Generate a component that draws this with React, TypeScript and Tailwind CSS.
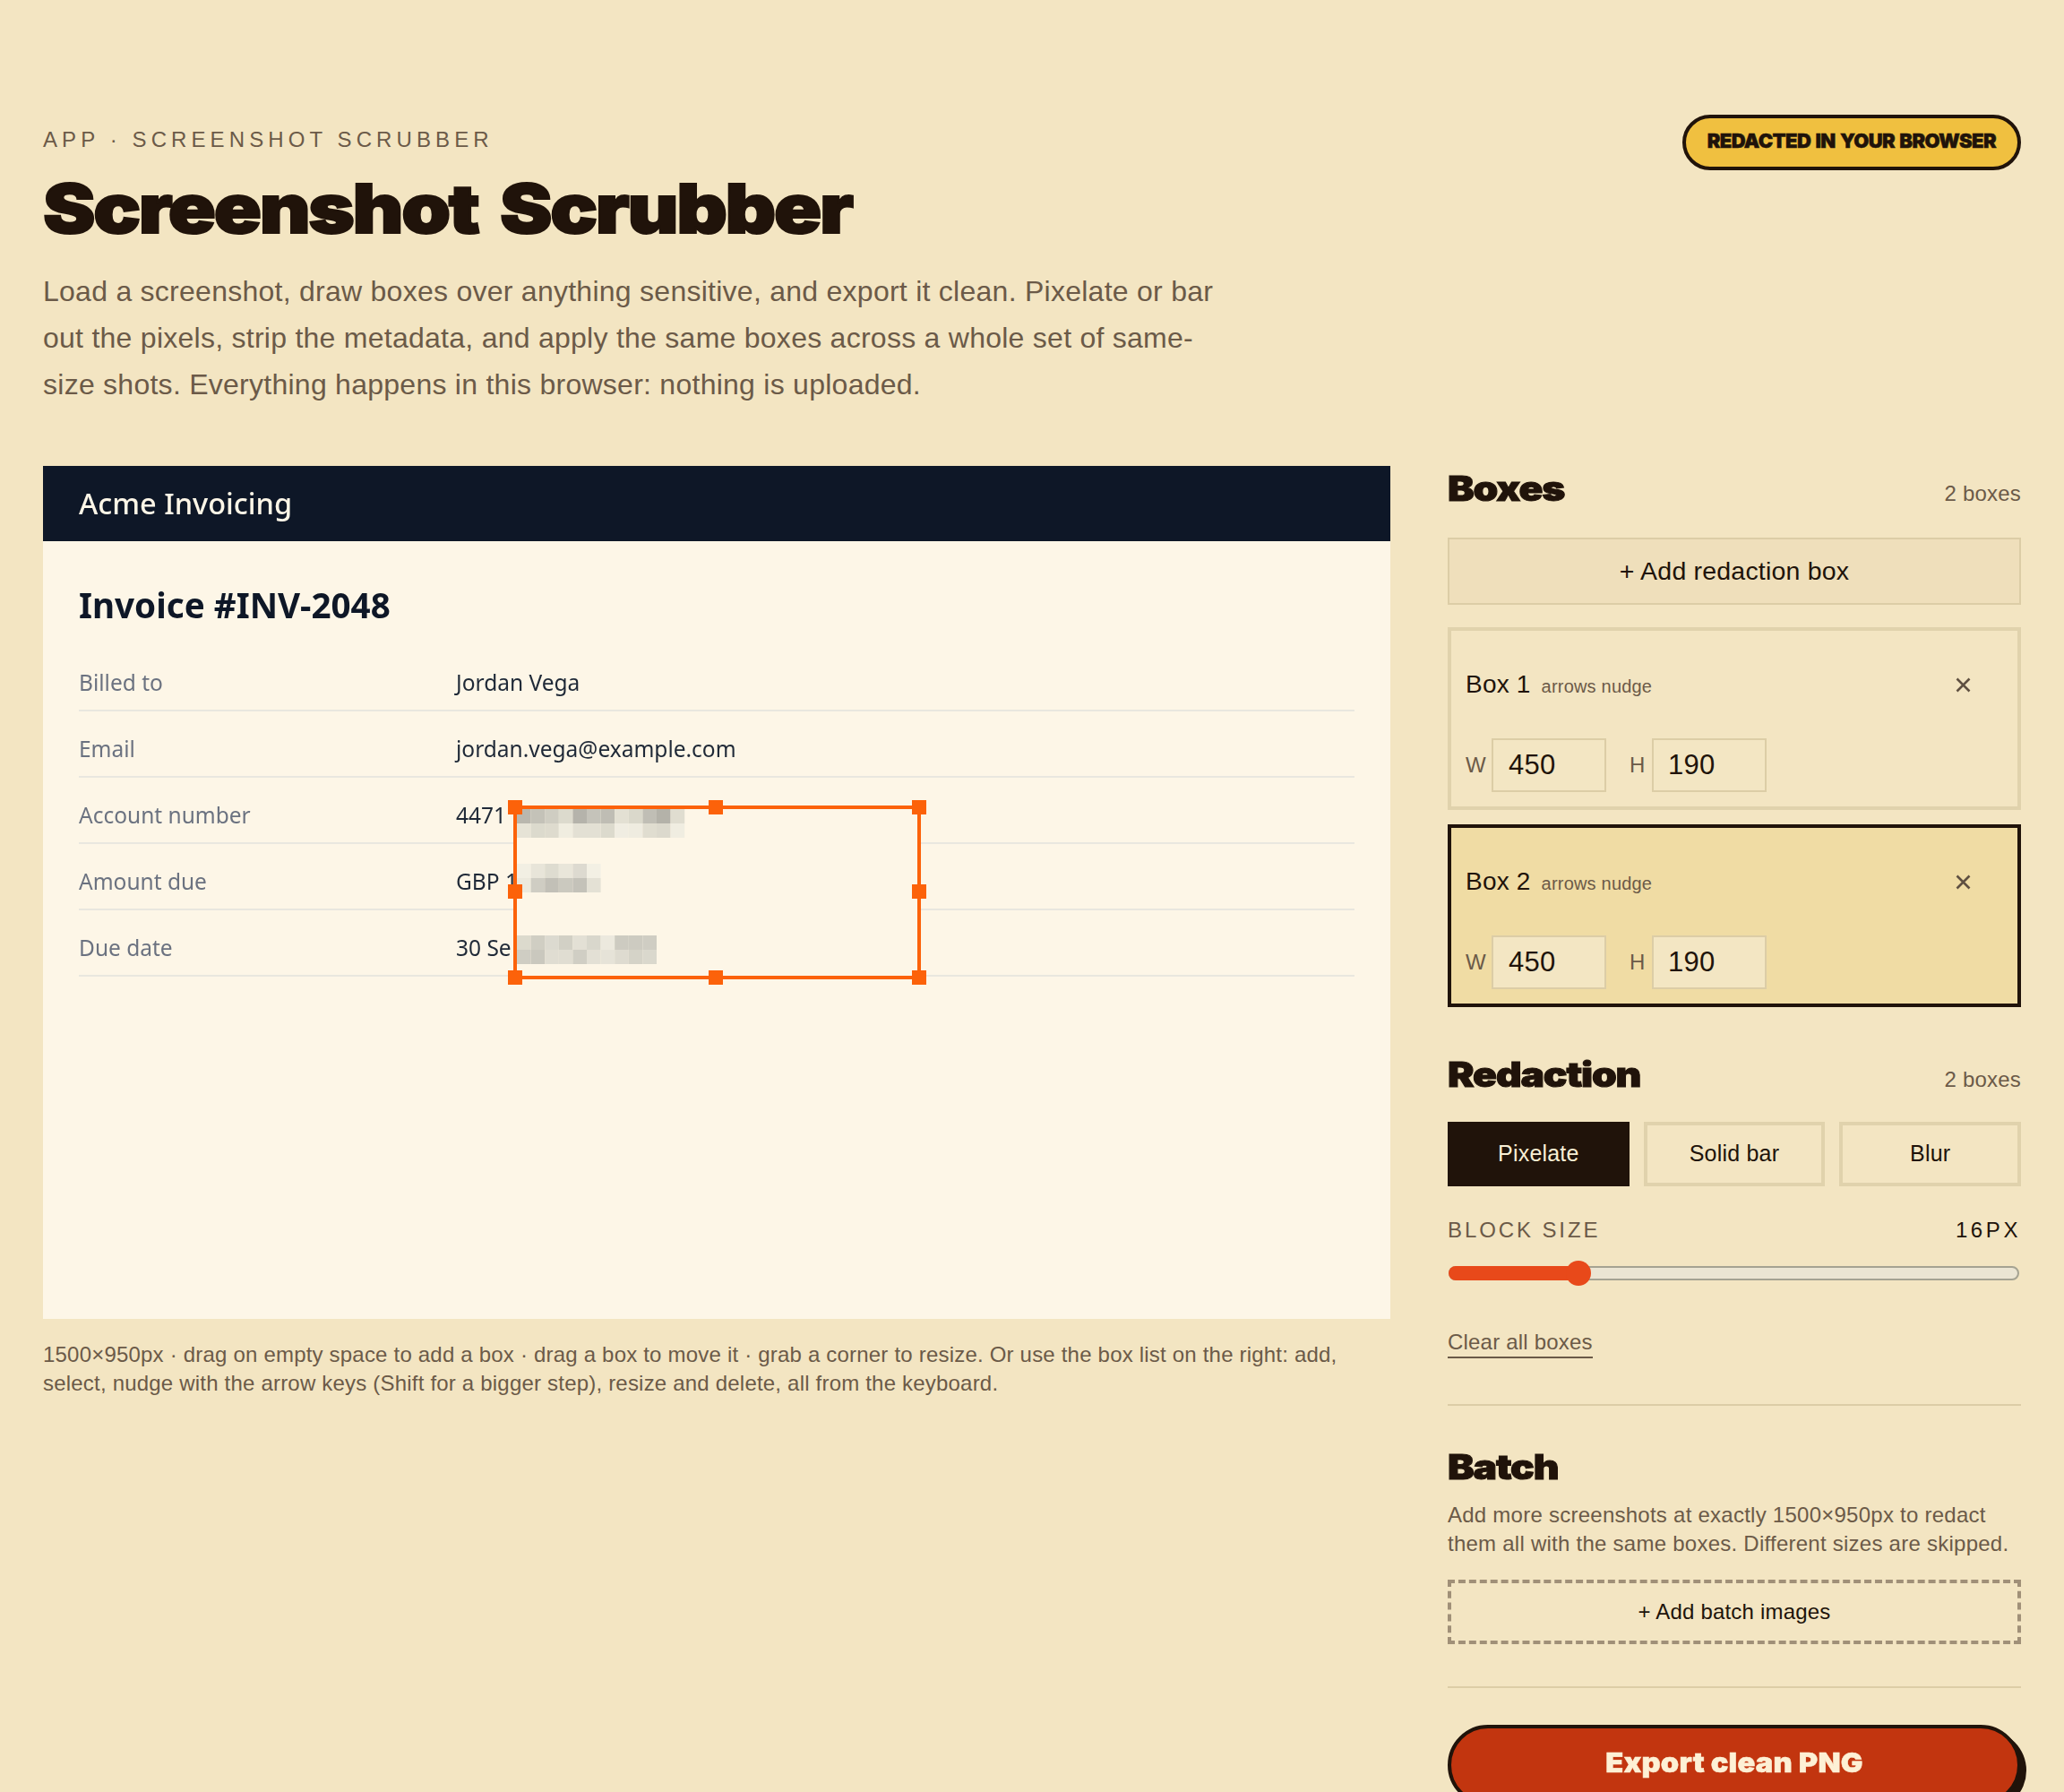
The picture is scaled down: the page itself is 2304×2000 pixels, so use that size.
import React from 'react';

const rows = [
  { label: 'Billed to', value: 'Jordan Vega' },
  { label: 'Email', value: 'jordan.vega@example.com' },
  { label: 'Account number', value: '4471' },
  { label: 'Amount due', value: 'GBP 1' },
  { label: 'Due date', value: '30 Se' },
];

// pixelated blocks inside the redaction box: [y, colours]
const blocks: [number, string[]][] = [
  [0, ['#b9b7ae', '#c4c2b8', '#cfcdc2', '#dcdacd', '#b5b3ab', '#c5c3ba', '#bfbdb4', '#e3e0d3', '#dad8cb', '#c0beb5', '#b4b2a9', '#e0ddd0']],
  [16, ['#e6e3d6', '#dcdacd', '#dedbce', '#f0ede0', '#e3e0d4', '#e3e0d4', '#dcdacd', '#f0ede2', '#efece0', '#e0ddd0', '#dcd9cd', '#f0ede1']],
  [61, ['#f2efe3', '#e8e5d9', '#dedcd0', '#e9e6da', '#dddad0', '#f3f0e4']],
  [77, ['#ece9dd', '#cfcdc3', '#c2c0b7', '#cbc9bf', '#c4c2b9', '#e4e1d5']],
  [141, ['#dcdacd', '#d0cec3', '#dcdad0', '#d2d0c5', '#e3e0d5', '#d9d7cc', '#ece9de', '#cdcbc1', '#cdcbc1', '#cfcdc3']],
  [157, ['#cfcdc3', '#cac8be', '#e0ddd2', '#e0ddd2', '#d0cec4', '#e3e0d5', '#e6e3d8', '#dedbd0', '#d5d3c8', '#dad8cd']],
];

const handleClasses = [
  'left-[-10px] top-[-10px]',
  'left-[214px] top-[-10px]',
  'right-[-10px] top-[-10px]',
  'left-[-10px] top-[84px]',
  'right-[-10px] top-[84px]',
  'left-[-10px] bottom-[-10px]',
  'left-[214px] bottom-[-10px]',
  'right-[-10px] bottom-[-10px]',
];

const display = "font-['Inter',sans-serif] font-black text-[#20130a]";

const SectionHead: React.FC<{ title: string; count?: string; className?: string }> = ({ title, count, className }) => (
  <div className={`flex items-baseline justify-between h-12 ${className || ''}`}>
    <h2 className={`${display} inline-block origin-left scale-x-[1.17] text-[38px] leading-[48px] tracking-[-1px] [-webkit-text-stroke:1px_#20130a]`}>{title}</h2>
    {count && <span className="text-2xl leading-8 text-[#6b5a48]">{count}</span>}
  </div>
);

const BoxCard: React.FC<{ name: string; active?: boolean }> = ({ name, active }) => (
  <div className={`h-[204px] border-4 px-4 ${active ? 'border-[#20130a] bg-[#f0dca4]' : 'border-[#e0d2ac]'}`}>
    <div className="flex items-center h-[120px]">
      <span className="text-[28px] leading-9 text-[#20130a]">{name}</span>
      <span className="ml-3 mt-[4px] text-xl text-[#6b5a48]">arrows nudge</span>
      <svg className="ml-auto mr-[36px]" width="17" height="17" viewBox="0 0 17 17" fill="none" stroke="#5f5041" strokeWidth="2.6">
        <path d="M1.5 1.5l14 14M15.5 1.5l-14 14" />
      </svg>
    </div>
    <div className="flex items-center">
      <span className="w-[29px] text-2xl text-[#6b5a48]">W</span>
      <div className="w-[128px] h-[60px] border-2 border-[#dccda6] bg-[#f3e6c3] pl-[17px] text-[31px] leading-[56px] text-[#20130a]">450</div>
      <span className="ml-[26px] w-[25px] text-2xl text-[#6b5a48]">H</span>
      <div className="w-[128px] h-[60px] border-2 border-[#dccda6] bg-[#f3e6c3] pl-[16px] text-[31px] leading-[56px] text-[#20130a]">190</div>
    </div>
  </div>
);

const Canvas: React.FC = () => (
  <div className="relative h-[952px] bg-[#fdf6e7] tracking-normal font-['Noto_Sans',sans-serif]">
    <div className="blur-[0.6px]">
      <div className="flex items-center h-[84px] px-10 bg-[#0e1727] text-[32.5px] font-medium text-[#fdf6e7]">Acme Invoicing</div>
      <div className="px-10 pt-[45px]">
        <h3 className="text-[38.6px] leading-[52px] font-bold text-[#0e1727] mb-[19px]">Invoice #INV-2048</h3>
        {rows.map((r) => (
          <div key={r.label} className="flex items-center h-[74px] pt-[12px] border-b-2 border-[#e9e7df] text-[24.5px]">
            <span className="w-[421px] text-[#6b7280]">{r.label}</span>
            <span className="text-[#1f2937]">{r.value}</span>
          </div>
        ))}
      </div>
    </div>
    {/* redaction box */}
    <div className="absolute left-[525px] top-[379px] w-[455px] h-[194px] border-4 border-[#fc620a] bg-[#fdf6e7]">
      <svg className="absolute left-0 top-0 blur-[0.5px]" width="446" height="186">
        {blocks.map(([y, colours]) =>
          colours.map((c, i) => <rect key={`${y}-${i}`} x={i * 15.6} y={y} width="15.6" height="16" fill={c} />)
        )}
      </svg>
      {handleClasses.map((h) => (
        <div key={h} className={`absolute w-4 h-4 bg-[#fc620a] ${h}`} />
      ))}
    </div>
  </div>
);

export default function App() {
  return (
    <div className="min-h-screen bg-[#f3e5c2] px-12 pt-[140px] pb-16 tracking-[0.2px] font-['Liberation_Sans',sans-serif]">
      <header className="relative">
        <p className="text-2xl leading-8 tracking-[5.1px] text-[#6b5a48]">APP · SCREENSHOT SCRUBBER</p>
        <h1 className={`${display} mt-[18px] inline-block origin-left scale-x-[1.155] text-[76px] leading-[84px] tracking-[-2px] [word-spacing:8px] [-webkit-text-stroke:2px_#20130a]`}>Screenshot Scrubber</h1>
        <p className="mt-[25px] max-w-[1320px] text-[32px] leading-[52px] tracking-[0.26px] text-[#6b5a48]">
          Load a screenshot, draw boxes over anything sensitive, and export it clean. Pixelate or bar out the pixels, strip the metadata, and apply the same boxes across a whole set of same-size shots. Everything happens in this browser: nothing is uploaded.
        </p>
        <div className={`absolute right-0 top-[-12px] rounded-full border-4 border-[#20130a] bg-[#f0c040] px-6 pt-[10px] pb-[14px] ${display} text-[22px] leading-[30px] tracking-[-0.6px] [word-spacing:1.5px] whitespace-nowrap [-webkit-text-stroke:0.5px_#20130a]`}>
          REDACTED IN YOUR BROWSER
        </div>
      </header>

      <main className="mt-[65px] grid grid-cols-[1504px_640px] gap-16">
        <section>
          <Canvas />
          <p className="mt-[24px] text-2xl leading-8 text-[#6b5a48]">
            1500×950px · drag on empty space to add a box · drag a box to move it · grab a corner to resize. Or use the box list on the right: add, select, nudge with the arrow keys (Shift for a bigger step), resize and delete, all from the keyboard.
          </p>
        </section>

        <aside className="pt-[1px]">
          <SectionHead title="Boxes" count="2 boxes" />
          <button className="mt-[31px] w-full h-[75px] border-2 border-[#dccda6] bg-[#efdfbb] text-[28.5px] text-[#20130a]">+ Add redaction box</button>
          <div className="mt-[25px] flex flex-col gap-4">
            <BoxCard name="Box 1" />
            <BoxCard name="Box 2" active />
          </div>

          <SectionHead title="Redaction" count="2 boxes" className="mt-[51px]" />
          <div className="mt-[29px] grid grid-cols-3 gap-4 h-[72px]">
            <button className="bg-[#20130a] text-[25px] text-[#f8eed4]">Pixelate</button>
            <button className="border-4 border-[#e0d2ac] text-[25px] text-[#20130a]">Solid bar</button>
            <button className="border-4 border-[#e0d2ac] text-[25px] text-[#20130a]">Blur</button>
          </div>
          <div className="mt-[35px] flex justify-between text-2xl leading-7">
            <span className="tracking-[2.9px] text-[#6b5a48]">BLOCK SIZE</span>
            <span className="tracking-[3.6px] text-[#20130a]">16PX</span>
          </div>
          <div className="relative mt-[26px] ml-[1px] mr-[2px] h-4 rounded-full border-2 border-[#a5a392] bg-[#ebe5d3]">
            <div className="absolute left-[-2px] top-[-2px] h-4 w-[147px] rounded-l-full bg-[#e8491a]" />
            <div className="absolute left-[129px] top-[-8px] h-7 w-7 rounded-full bg-[#e8491a]" />
          </div>
          <div className="mt-[55px]">
            <span className="inline-block h-8 border-b-2 border-[#6b5a48] text-2xl leading-[28px] text-[#6b5a48]">Clear all boxes</span>
          </div>
          <div className="mt-[51px] border-t-2 border-[#dccda6]" />

          <SectionHead title="Batch" className="mt-[44px]" />
          <p className="mt-[14px] text-2xl leading-8 tracking-[0.25px] text-[#6b5a48]">
            Add more screenshots at exactly 1500×950px to redact them all with the same boxes. Different sizes are skipped.
          </p>
          <button className="mt-[24px] w-full h-[72px] border-4 border-dashed border-[#a09078] text-2xl text-[#20130a]">+ Add batch images</button>
          <div className="mt-[47px] border-t-2 border-[#dccda6]" />
          <button className={`mt-[41px] w-full h-[90px] rounded-[45px] border-4 border-[#20130a] bg-[#c2350f] pb-[6px] shadow-[6px_6px_0_#20130a] ${display}`}>
            <span className="inline-block scale-x-[1.09] text-[30px] text-[#fdf0d5] [-webkit-text-stroke:0.5px_#fdf0d5]">Export clean PNG</span>
          </button>
        </aside>
      </main>
    </div>
  );
}
